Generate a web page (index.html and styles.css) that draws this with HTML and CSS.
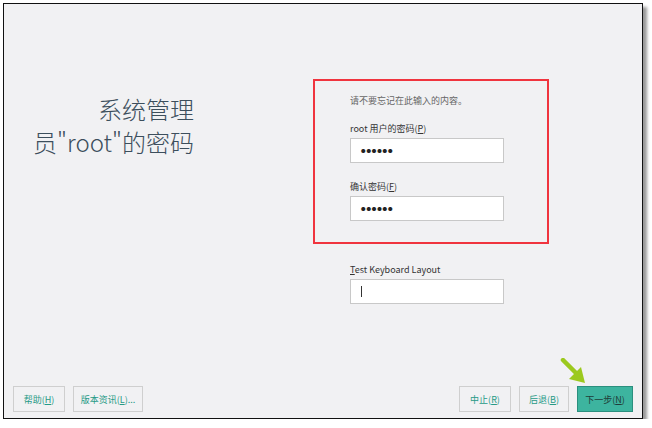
FILE: index.html
```html
<!DOCTYPE html>
<html lang="zh-CN">
<head>
    <meta charset="UTF-8">
    <title>系统管理员"root"的密码</title>
    <link rel="stylesheet" href="styles.css">
</head>
<body>
    <div class="window">
        <div class="content">
            <h1 class="title">系统管理<br>员"root"的密码</h1>
            <div class="column">
                <div class="panel">
                    <p class="hint">请不要忘记在此输入的内容。</p>
                    <label class="label">root 用户的密码(<u>P</u>)</label>
                    <div class="field">●●●●●●</div>
                    <label class="label label-gap">确认密码(<u>F</u>)</label>
                    <div class="field">●●●●●●</div>
                </div>
                <div class="keyboard">
                    <label class="label"><u>T</u>est Keyboard Layout</label>
                    <div class="field"><span class="caret"></span></div>
                </div>
            </div>
        </div>

        <div class="footer">
            <button class="btn btn-help">帮助(<u>H</u>)</button>
            <button class="btn btn-notes">版本资讯(<u>L</u>)...</button>
            <div class="spacer"></div>
            <button class="btn btn-abort">中止(<u>R</u>)</button>
            <button class="btn btn-back">后退(<u>B</u>)</button>
            <button class="btn btn-next">下一步(<u>N</u>)</button>
        </div>

        <!-- pointer arrow over the next button -->
        <svg class="arrow" width="34" height="32" viewBox="0 0 34 32">
            <line x1="4" y1="2" x2="17" y2="15" stroke="#9cc91e" stroke-width="4.5" stroke-linecap="round"/>
            <polygon points="26,25 10,21 22,9" fill="#9cc91e"/>
        </svg>
    </div>
</body>
</html>
```

FILE: styles.css
```css
body {
    margin: 0;
    background-color: #ffffff;
    font-family: "Noto Sans CJK SC", "Noto Sans", sans-serif;
}
.window {
    position: relative;
    box-sizing: border-box;
    width: 640px;
    height: 416px;
    margin: 3px 0 0 3px;
    border: 1px solid #111;
    background-color: #f1f1f3;
    box-shadow: 4px 4px 3px #9a9a9a;
    display: flex;
    flex-direction: column;
}
.content {
    flex: 1;
    display: flex;
    padding-top: 75px;
}
.title {
    width: 190px;
    margin: 13px 0 0 0;
    text-align: right;
    font-size: 24px;
    line-height: 33px;
    font-weight: 300;
    color: #3c4e5c;
}
.column {
    margin-left: 119px;
}
.panel {
    box-sizing: border-box;
    width: 236px;
    height: 165px;
    border: 2px solid #f0343e;
    padding: 14px 0 0 35px;
}
.hint {
    margin: 0 0 16px 0;
    font-size: 9px;
    line-height: 12px;
    color: #666;
}
.label {
    display: block;
    margin-bottom: 3px;
    font-size: 9px;
    line-height: 12px;
    color: #333;
}
.label-gap {
    margin-top: 18px;
}
.field {
    box-sizing: border-box;
    width: 154px;
    height: 25px;
    padding-left: 10px;
    border: 1px solid #c8c8c8;
    background-color: #fff;
    font-size: 4.5px;
    line-height: 23px;
    letter-spacing: 0.9px;
    color: #222;
}
.caret {
    display: inline-block;
    width: 1px;
    height: 11px;
    vertical-align: middle;
    background-color: #333;
}
.keyboard {
    margin: 20px 0 0 37px;
}
.footer {
    display: flex;
    gap: 8px;
    padding: 0 9px 6px 9px;
}
.spacer {
    flex: 1;
}
.btn {
    box-sizing: border-box;
    height: 26px;
    padding: 0;
    border: 1px solid #cfcfcf;
    background-color: #f1f1f3;
    font-family: "Noto Sans CJK SC", "Noto Sans", sans-serif;
    font-size: 9px;
    color: #279a86;
}
.btn-help, .btn-abort {
    width: 52px;
}
.btn-notes {
    width: 70px;
}
.btn-back {
    width: 50px;
}
.btn-next {
    width: 56px;
    background-color: #3db49f;
    border-color: #2b8f7e;
    color: #1f3d38;
}
.arrow {
    position: absolute;
    left: 555px;
    top: 354px;
}
```
